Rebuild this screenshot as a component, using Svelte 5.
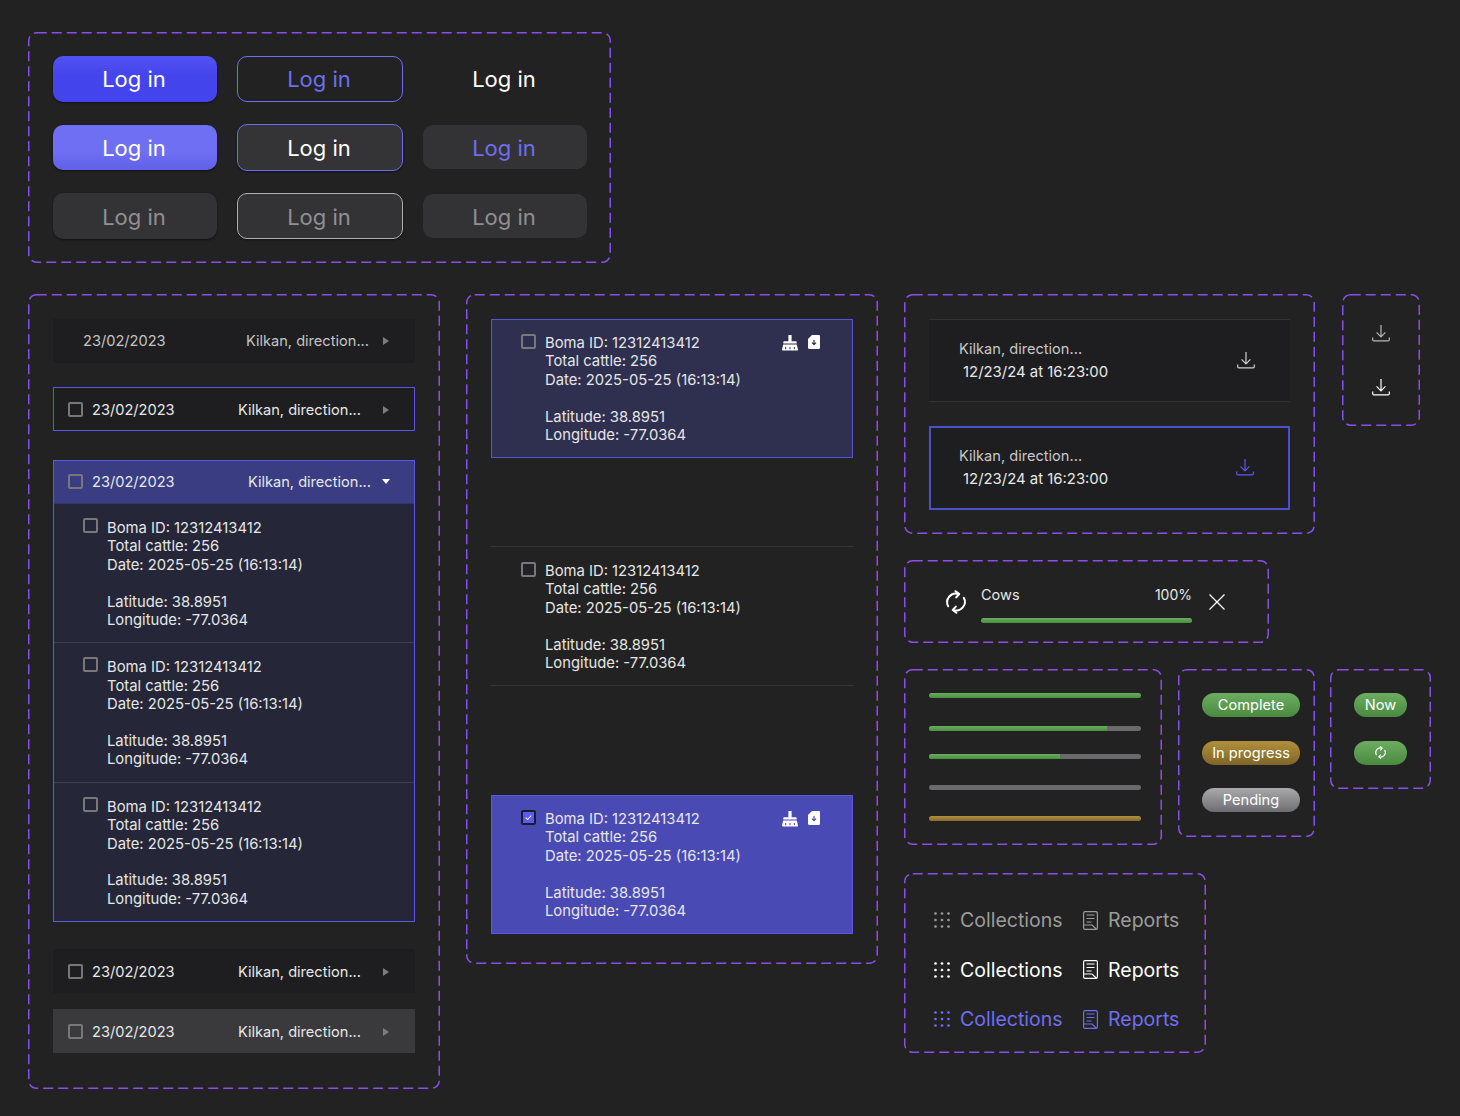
<script>
  const bars = [
    { w: 100, c: 'green' }, { w: 84, c: 'green' }, { w: 62, c: 'green' }, { w: 0, c: 'green' }, { w: 100, c: 'amber' }
  ];
  const barGaps = ['g0', 'g1', 'g2', 'g3', 'g3'];
  const btns = ['primary', 'outline', 'ghost', 'primary-h', 'outline-h', 'ghost-h', 'dis', 'outline-d', 'ghost-d'];
  const subs = [0, 1, 2];
  const navs = ['muted', 'white', 'accent'];
</script>

{#snippet dash()}
  <svg class="dash" aria-hidden="true"><rect class="dash-r" rx="8" ry="8"></rect></svg>
{/snippet}

{#snippet check(on = false)}
  <span class="cb" class:on>
    {#if on}<svg viewBox="0 0 12 12" width="11" height="11"><path d="M3 6.2l2 2 4-4.400" fill="none" stroke="#fff" stroke-width="1.1"/></svg>{/if}
  </span>
{/snippet}

{#snippet dl()}
  <svg class="dl" viewBox="0 0 18 18" width="18" height="18" fill="none" stroke="currentColor" stroke-width="1.2">
    <path d="M9 1v11.600M4.600 8.400 9 12.800l4.400-4.400M.7 13.400v2.300c0 .7.5 1.200 1.200 1.200h14.200c.7 0 1.200-.5 1.200-1.200v-2.300"/>
  </svg>
{/snippet}

{#snippet sync(size = 24, sw = 2)}
  <svg viewBox="0 0 24 24" width={size} height={size} fill="none" stroke="#fff" stroke-width={sw} stroke-linecap="round" stroke-linejoin="round">
    <path d="M4.200 16.200A8.600 8.600 0 0 1 14.600 4"/><path d="M11.600 1.200 15.200 4l-3 3.400"/>
    <path d="M19.800 7.800A8.600 8.600 0 0 1 9.400 20"/><path d="M12.400 22.800 8.800 20l3-3.400"/>
  </svg>
{/snippet}

{#snippet boma(kind, actions = false, on = false)}
  <div class="boma {kind}">
    {@render check(on)}
    <div class="boma-text">Boma ID: 12312413412<br>Total cattle: 256<br>Date: 2025-05-25 (16:13:14)<br><br>Latitude: 38.8951<br>Longitude: -77.0364</div>
    {#if actions}
      <div class="acts">
        <svg viewBox="0 0 16 16" width="16" height="16" fill="#fff">
          <path d="M6.400 0h3.200v6.200h4.200c.5 0 .9.4.9.9v1.500H1.300V7.100c0-.5.4-.9.9-.9h4.200z"/>
          <path d="M1.200 9.400h13.600l1.200 5.100c.1.500-.2.900-.7.900H.7c-.5 0-.8-.4-.7-.9zM3.200 12v2.200h1V12zm4.300 0v2.200h1V12zm4.300 0v2.200h1V12z" fill-rule="evenodd"/>
        </svg>
        <svg viewBox="0 0 12 14" width="12" height="14"><path d="M4 0h6.800c.7 0 1.200.5 1.200 1.200v11.600c0 .7-.5 1.200-1.200 1.200H1.200C.5 14 0 13.500 0 12.800V4z" fill="#fff"/><path d="M6 5v4.400M4 7.600 6 9.600l2-2" fill="none" stroke={kind === 'sel' ? '#4a4ab5' : '#2f2f50'} stroke-width="1.2"/></svg>
      </div>
    {/if}
  </div>
{/snippet}

{#snippet row(cls)}
  <div class="row {cls}">
    {@render check()}
    <span class="date">23/02/2023</span>
    <span class="kil">Kilkan, direction...</span>
    <i class="tri"></i>
  </div>
{/snippet}

{#snippet file(cls)}
  <div class="file {cls}">
    <div class="file-t"><div class="f1">Kilkan, direction...</div><div class="f2">12/23/24 at 16:23:00</div></div>
    {@render dl()}
  </div>
{/snippet}

<div class="page">
  <section class="frame buttons">
    {@render dash()}
    {#each btns as b}
      <button class="btn {b}">Log in</button>
    {/each}
  </section>

  <div class="main">
    <section class="frame list">
      {@render dash()}
      <div class="row r-plain"><span class="date">23/02/2023</span><span class="kil">Kilkan, direction...</span><i class="tri"></i></div>
      {@render row('r-focus')}
      <div class="group">
        <div class="row r-open">
          {@render check()}
          <span class="date">23/02/2023</span>
          <span class="kil">Kilkan, direction...</span>
          <i class="caret"></i>
        </div>
        {#each subs as s}
          {@render boma('sub')}
        {/each}
      </div>
      {@render row('r-dark')}
      {@render row('r-hover')}
    </section>

    <section class="frame cards">
      {@render dash()}
      {@render boma('focus', true)}
      {@render boma('line')}
      {@render boma('sel', true, true)}
    </section>

    <div class="side">
      <div class="side-a">
        <section class="frame files">
          {@render dash()}
          {@render file('plain')}
          {@render file('focus')}
        </section>
        <section class="frame dls">
          {@render dash()}
          <span class="i-gray">{@render dl()}</span>
          <span class="i-white">{@render dl()}</span>
        </section>
      </div>

      <section class="frame prog">
        {@render dash()}
        <div class="prog-icon">{@render sync()}</div>
        <div class="prog-main">
          <div class="prog-top"><span>Cows</span><span class="pct">100%</span></div>
          <div class="bar"><div class="fill green prog-fill"></div></div>
        </div>
        <svg class="x" viewBox="0 0 16 16" width="16" height="16" fill="none" stroke="#fff" stroke-width="1.3"><path d="M.5.5l15 15M15.500.5l-15 15"/></svg>
      </section>

      <div class="side-b">
        <section class="frame bars">
          {@render dash()}
          {#each bars as b, i}
            <div class="bar {barGaps[i]}"><div class="fill {b.c}" style="width:{b.w}%"></div></div>
          {/each}
        </section>
        <section class="frame badges">
          {@render dash()}
          <span class="badge b-green">Complete</span>
          <span class="badge b-amber">In progress</span>
          <span class="badge b-gray">Pending</span>
        </section>
        <section class="frame badges small">
          {@render dash()}
          <span class="badge b-green">Now</span>
          <span class="badge b-green">{@render sync(13, 2)}</span>
        </section>
      </div>

      <section class="frame navs">
        {@render dash()}
        {#each navs as n}
          <div class="nav {n}">
            <svg class="i-dots" viewBox="0 0 16 16" width="16" height="16" fill="currentColor">
              {#each [1.5, 8, 14.5] as y}
                {#each [1.5, 8, 14.5] as x}<circle cx={x} cy={y} r="1.35"/>{/each}
              {/each}
            </svg>
            <span class="n-col">Collections</span>
            <svg class="i-rep" viewBox="0 0 15 19" width="15" height="19" fill="none" stroke="currentColor" stroke-width="1.2">
              <rect x=".6" y=".6" width="13.800" height="17.800" rx="1.500"/>
              <path d="M3.500 4h8M3.500 7.500h8M3.500 11h5M.6 14h8.400l4.500 4.200"/>
            </svg>
            <span>Reports</span>
          </div>
        {/each}
      </section>
    </div>
  </div>
</div>

<style>
  :global(body) {
    margin: 0;
    background: #222222;
  }
  .page {
    font-family: Inter, "Liberation Sans", sans-serif;
    width: 1460px;
    height: 1116px;
    box-sizing: border-box;
    padding: 32px 0 0 28px;
    color: #fff;
    overflow: hidden;
  }
  .frame {
    position: relative;
    box-sizing: border-box;
    padding: 25px;
  }
  .dash {
    position: absolute;
    inset: 0;
    width: 100%;
    height: 100%;
    pointer-events: none;
  }
  .dash-r {
    x: 0.75px;
    y: 0.75px;
    width: calc(100% - 1.5px);
    height: calc(100% - 1.5px);
    fill: none;
    stroke: #8a4fea;
    stroke-width: 1.5;
    stroke-dasharray: 10 5;
  }

  /* buttons */
  .buttons {
    width: 583px;
    height: 231px;
    padding: 24px 0 0 25px;
    display: grid;
    grid-template-columns: 164px 166px 164px;
    grid-auto-rows: 45.500px;
    column-gap: 20px;
    row-gap: 23px;
    align-items: center;
  }
  .btn {
    font: 400 22px/1 Inter, sans-serif;
    height: 45.500px;
    border: 0;
    padding: 0 2px 0 0;
    border-radius: 10px;
    background: none;
    color: #fff;
    box-sizing: border-box;
  }
  .primary { background: linear-gradient(#5252f2 0, #4545ee 40%, #4444ee 100%); box-shadow: 0 1px 2px #111; }
  .outline { border: 1.500px solid #6e6ef0; color: #6e6ef0; height: 46.500px; }
  .primary-h { background: linear-gradient(#6f6ff3 0, #6f6ff3 60%, #6060e8 100%); box-shadow: 0 1px 2px #111; padding-top: 2px; }
  .outline-h { border: 1.500px solid #6e6ef0; background: #343437; box-shadow: 0 1px 2px #111; height: 46.500px; padding-top: 2px; }
  .ghost-h { background: #333336; color: #6e6ef0; height: 44px; padding-top: 2px; }
  .dis { background: #333336; color: #909092; box-shadow: 0 1px 2px #111; padding-top: 2px; }
  .outline-d { border: 1.500px solid #b0b0b0; background: #333336; color: #909092; box-shadow: 0 1px 2px #111; height: 46.500px; padding-top: 2px; }
  .ghost-d { background: #333336; color: #909092; height: 44px; padding-top: 2px; }

  .main {
    display: flex;
    gap: 26px;
    margin-top: 31px;
    align-items: flex-start;
  }

  /* list */
  .list {
    width: 412px;
    height: 795px;
  }
  .row {
    box-sizing: border-box;
    display: flex;
    align-items: center;
    height: 44px;
    width: 362px;
    font-size: 14.600px;
    color: #e8e8e8;
    padding-left: 15px;
    background: #1e1e20;
  }
  .date { margin-left: 9px; }
  .kil { margin-left: auto; margin-right: 22px; }
  .tri {
    width: 0; height: 0;
    border-left: 6px solid #7c7c7c;
    border-top: 4.500px solid transparent;
    border-bottom: 4.500px solid transparent;
    margin-right: 26px;
  }
  .caret {
    width: 0; height: 0;
    border-top: 5px solid #fff;
    border-left: 4.500px solid transparent;
    border-right: 4.500px solid transparent;
    margin-right: 24px;
  }
  .r-plain { padding-left: 21px; padding-bottom: 1px; color: #c4c4c4; }
  .r-plain .kil { margin-right: 14px; }
  .r-focus { margin-top: 24px; border: 1px solid #5858e6; padding-left: 14px; padding-top: 1px; }
  .r-focus .tri { margin-right: 25px; }
  .r-open { background: #3b3d82; border-bottom: 1px solid #35366e; padding-left: 14px; padding-bottom: 1px; }
  .r-open .kil { margin-right: 11px; }
  .group {
    margin-top: 29px;
    width: 362px;
    height: 462px;
    box-sizing: border-box;
    border: 1px solid #5858e6;
    background: #252638;
    overflow: hidden;
  }
  .group .row { width: 360px; height: 43px; }
  .r-dark { margin-top: 27px; padding-top: 1px; }
  .r-hover { margin-top: 16px; padding-top: 1px; background: #3a3a3d; }

  .cb {
    box-sizing: border-box;
    flex: none;
    width: 15px;
    height: 15px;
    border: 2px solid #78787a;
    border-radius: 2px;
    display: flex;
    align-items: center;
    justify-content: center;
  }
  .cb.on { background: #5b5bf0; border-color: #1c1c2c; }

  .boma {
    box-sizing: border-box;
    display: flex;
    align-items: flex-start;
    height: 139px;
    padding: 15px 32px 0 29px;
    font-size: 14.800px;
    line-height: 18.400px;
    color: #e6e6e6;
  }
  .boma-text { margin-left: 9px; white-space: nowrap; }
  .sub { height: 139.400px; border-bottom: 1px solid #3d3e50; }
  .sub:last-child { border-bottom: 0; }
  .sub .cb { margin-top: -1px; }
  .acts { margin-left: auto; display: flex; gap: 10px; align-items: flex-start; }

  .cards { width: 412px; height: 670px; }
  .cards .boma { width: 362px; }
  .cards .boma-text { margin-top: -1px; }
  .focus { background: #2f2f50; border: 1px solid #5555d8; }
  .focus .cb, .sel .cb { margin-top: -1px; }
  .line { margin-top: 88px; height: 140px; border-top: 1px solid #343434; border-bottom: 1px solid #343434; padding-left: 30px; }
  .cards .line .boma-text { margin-top: 0; }
  .sel { margin-top: 109px; background: #4a4ab5; border: 1px solid #5858e0; }

  /* side */
  .side { display: flex; flex-direction: column; }
  .side-a { display: flex; gap: 27px; align-items: flex-start; }
  .files { width: 411px; height: 240px; }
  .file {
    box-sizing: border-box;
    width: 361px;
    height: 83px;
    background: #1e1e20;
    border-top: 1px solid #323234;
    border-bottom: 1px solid #323234;
    display: flex;
    align-items: center;
    padding: 0 35px 0 30px;
  }
  .file .dl { margin-left: auto; margin-bottom: 2px; color: #d0d0d0; }
  .file.focus {
    margin-top: 24px;
    height: 84px;
    border: 2px solid #4b50c8;
    background: #1e1e20;
    padding: 0 34px 0 28px;
  }
  .file.focus .dl { color: #5a5ae8; }
  .file-t { font-size: 14.600px; line-height: 23px; }
  .f1 { color: #c8c8c8; }
  .f2 { color: #e8e8e8; margin-left: 4px; font-size: 14.900px; }
  .dls {
    width: 78px;
    height: 132px;
    display: flex;
    flex-direction: column;
    align-items: center;
    gap: 36px;
    padding: 30px 0 0;
  }
  .dls span { display: block; height: 18px; }
  .i-gray { color: #b8b8b8; }
  .i-white { color: #fff; }

  .prog {
    margin-top: 26px;
    width: 365px;
    height: 83px;
    display: flex;
    align-items: center;
    padding: 0 0 0 40px;
  }
  .prog-icon { display: flex; }
  .prog-main { width: 211px; margin-left: 13px; }
  .prog-top { display: flex; justify-content: space-between; font-size: 14.500px; line-height: 18px; color: #e8e8e8; margin: 6px 0 14px; }
  .pct { font-size: 14px; }
  .prog .bar { margin: 0; }
  .prog-fill { width: 100%; }
  .x { margin-left: 17px; }

  .side-b { display: flex; align-items: flex-start; margin-top: 26px; }
  .bars { width: 258px; height: 176px; padding: 24px 21px 0 25px; }
  .bar { height: 5px; border-radius: 3px; background: #6a6a6c; overflow: hidden; }
  .g1 { margin-top: 28px; }
  .g2 { margin-top: 23px; }
  .g3 { margin-top: 26px; }
  .fill { height: 100%; }
  .green { background: linear-gradient(#6aac60, #4a8f40); }
  .amber { background: linear-gradient(#b0903f, #876c2b); }

  .badges {
    margin-left: 16px;
    width: 137px;
    height: 168px;
    padding: 24px;
    display: flex;
    flex-direction: column;
    align-items: flex-start;
    gap: 23.500px;
  }
  .badge {
    box-sizing: border-box;
    width: 98px;
    height: 24px;
    border-radius: 12px;
    display: flex;
    align-items: center;
    justify-content: center;
    font-size: 14.600px;
    color: #fff;
    white-space: nowrap;
  }
  .small { margin-left: 15px; width: 101px; height: 120px; }
  .small .badge { width: 53px; }
  .b-green { background: linear-gradient(#6dad62, #4a8a3f); }
  .b-amber { background: linear-gradient(#b18f3c, #7f6528); }
  .b-gray { background: linear-gradient(#a9a9ac, #6e6e72); }

  .navs {
    margin-top: 28px;
    width: 302px;
    height: 180px;
    padding: 32px 0 0 30px;
    display: flex;
    flex-direction: column;
    gap: 19px;
  }
  .nav {
    display: flex;
    align-items: center;
    height: 30.500px;
    font-size: 19.500px;
  }
  .n-col { margin-left: 10px; width: 123px; }
  .i-rep { margin-right: 10px; }
  .muted { color: #9c9c9c; }
  .white { color: #fff; }
  .accent { color: #6e6ef0; }
</style>
